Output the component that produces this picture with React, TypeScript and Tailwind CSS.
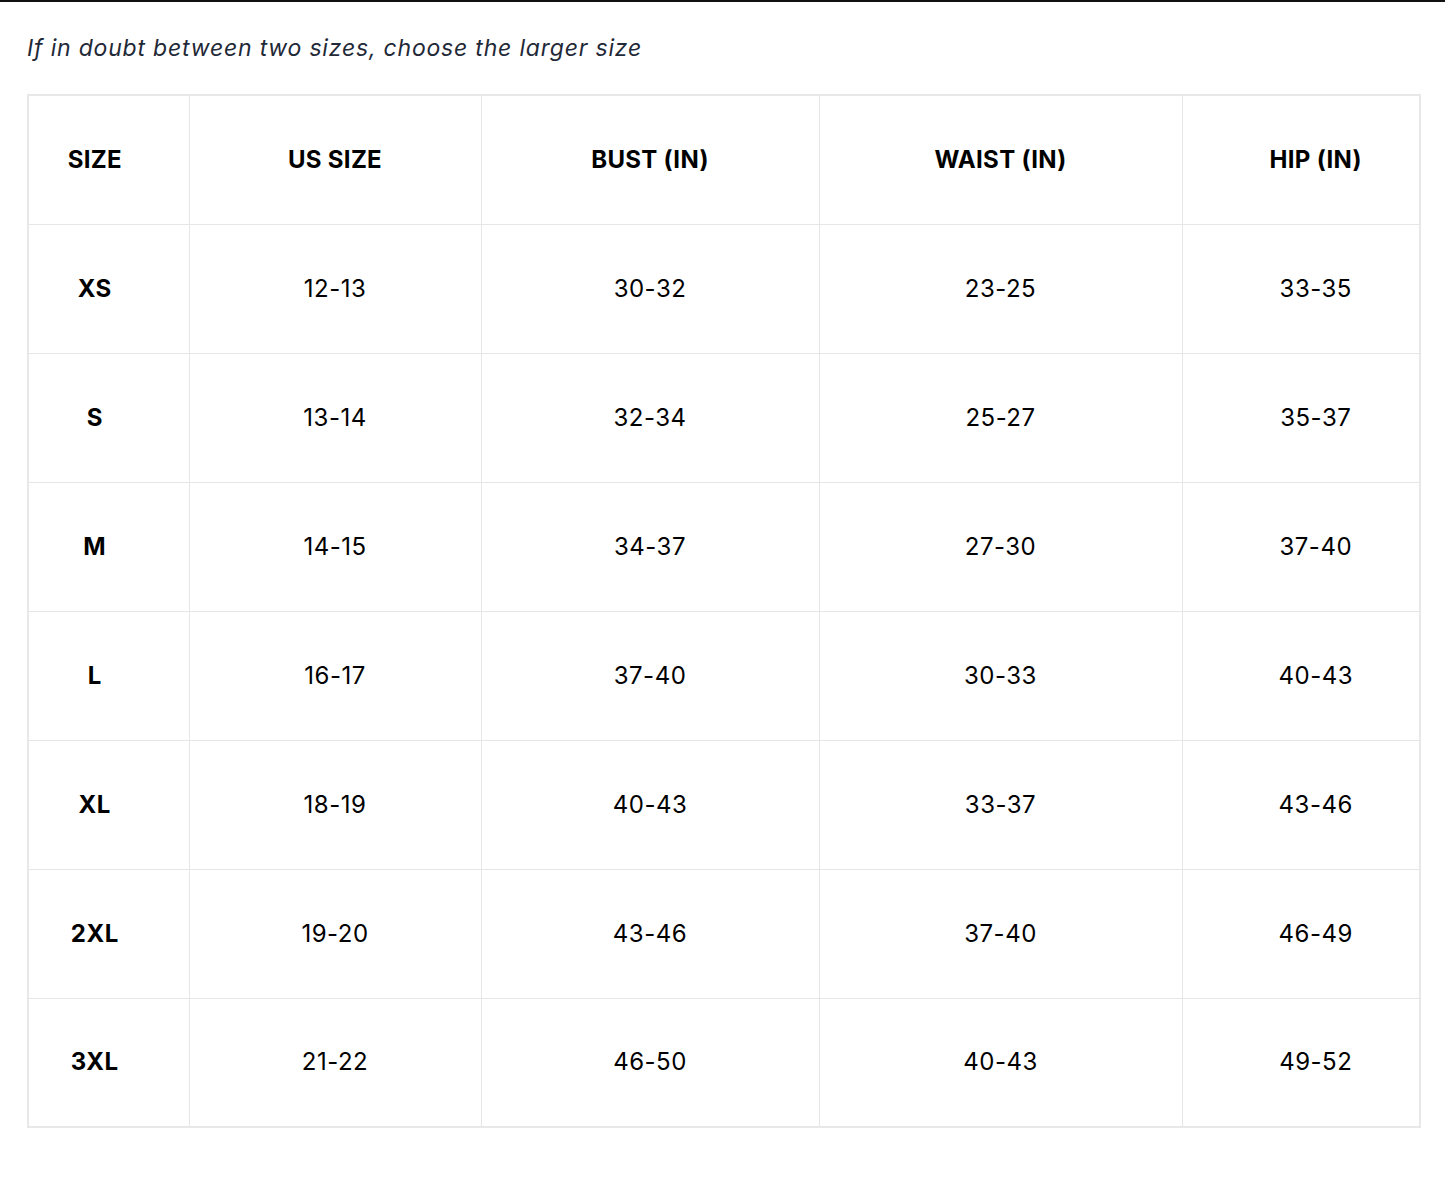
import React from "react";

const rows = [
  ["XS", "12-13", "30-32", "23-25", "33-35"],
  ["S", "13-14", "32-34", "25-27", "35-37"],
  ["M", "14-15", "34-37", "27-30", "37-40"],
  ["L", "16-17", "37-40", "30-33", "40-43"],
  ["XL", "18-19", "40-43", "33-37", "43-46"],
  ["2XL", "19-20", "43-46", "37-40", "46-49"],
  ["3XL", "21-22", "46-50", "40-43", "49-52"],
];

const headers = ["SIZE", "US SIZE", "BUST (IN)", "WAIST (IN)", "HIP (IN)"];
const widths = ["w-[161px]", "w-[292px]", "w-[338px]", "w-[363px]", "w-[238px]"];

// first and last columns are offset inward
const pad = (i: number) => (i === 0 ? "pr-[28px]" : i === 4 ? "pl-[30px]" : "");

export default function App() {
  return (
    <div className="min-h-[1184px] bg-white border-t-2 border-[#111] font-['Inter',sans-serif]">
      <div className="px-[27px] pt-[30px]">
        <p className="italic text-[23px] leading-[32px] text-[#1f2937] tracking-[0.8px]">
          If in doubt between two sizes, choose the larger size
        </p>
        <table className="mt-[30px] w-[1392px] table-fixed border-collapse border-2 border-[#e8e8e8] text-black">
          <colgroup>
            {widths.map((w) => (
              <col key={w} className={w} />
            ))}
          </colgroup>
          <thead>
            <tr className="h-[129px]">
              {headers.map((h, i) => (
                <th
                  key={h}
                  className={
                    "border border-[#e6e6e6] text-[24px] font-bold text-center tracking-[0.3px] " + pad(i)
                  }
                >
                  {h}
                </th>
              ))}
            </tr>
          </thead>
          <tbody>
            {rows.map((r) => (
              <tr key={r[0]} className="h-[129px]">
                {r.map((c, i) => (
                  <td
                    key={i}
                    className={
                      "border border-[#e6e6e6] text-[24px] text-center tracking-[0.5px] " +
                      (i === 0 ? "font-bold " : "font-normal ") +
                      pad(i)
                    }
                  >
                    {c}
                  </td>
                ))}
              </tr>
            ))}
          </tbody>
        </table>
      </div>
    </div>
  );
}
